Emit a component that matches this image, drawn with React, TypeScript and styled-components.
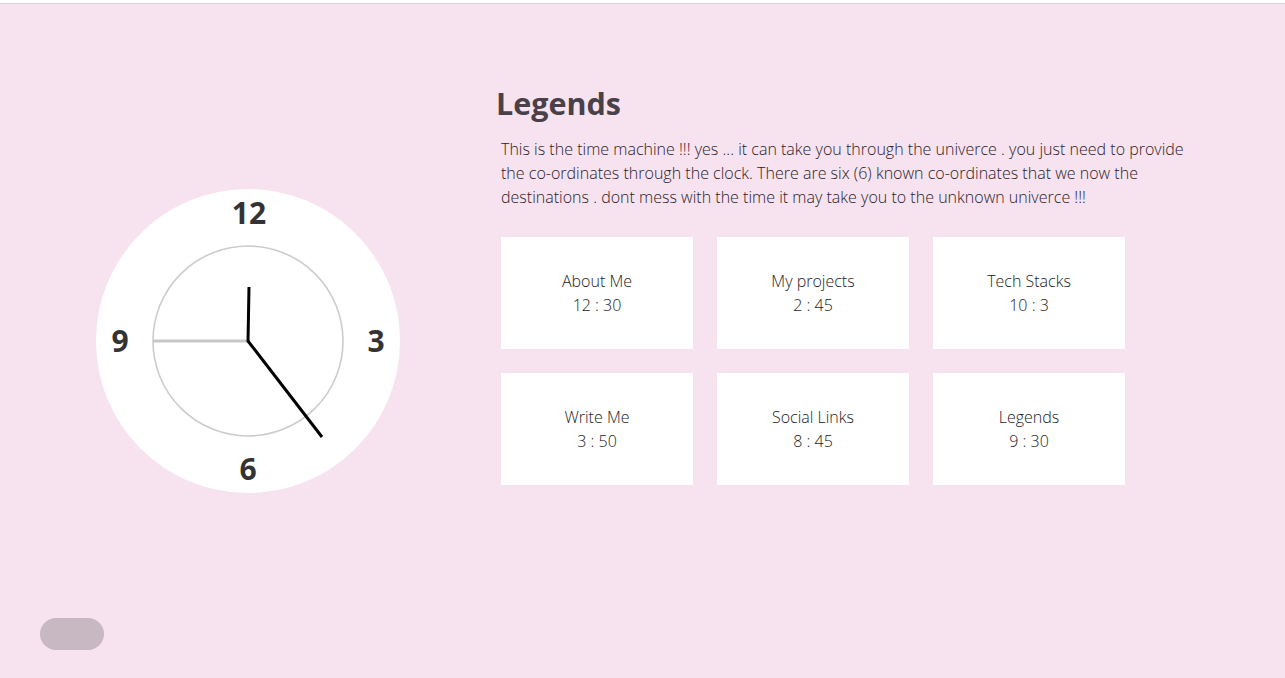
import React from "react";
import styled, { createGlobalStyle } from "styled-components";

const GlobalStyle = createGlobalStyle`
  html, body { margin: 0; padding: 0; }
  body {
    background: #f7e3ef;
    font-family: "Open Sans", "Noto Sans", sans-serif;
    color: #2b2b2b;
  }
`;

const TopBar = styled.div`
  height: 3px;
  background: #ffffff;
  border-bottom: 1px solid #dcd6da;
`;

const Main = styled.main`
  display: flex;
  height: 674px;
`;

const ClockColumn = styled.section`
  display: flex;
  align-items: center;
  padding-left: 96px;
  width: 304px;
  margin-right: 95px;
`;

const ClockFace = styled.svg`
  display: block;
  width: 304px;
  height: 304px;
`;

const Content = styled.section`
  display: flex;
  flex-direction: column;
  padding-top: 81px;
`;

const Title = styled.h1`
  margin: 0 0 0 1px;
  font-size: 30.5px;
  line-height: 36px;
  font-weight: 700;
  color: #4a4048;
`;

const Description = styled.p`
  margin: 16px 0 0 6px;
  width: 700px;
  font-size: 16px;
  line-height: 24px;
  font-weight: 300;
  letter-spacing: 0.01px;
  color: #2a2228;
`;

const Grid = styled.div`
  margin: 28px 0 0 6px;
  display: grid;
  grid-template-columns: repeat(3, 192px);
  grid-auto-rows: 112px;
  gap: 24px;
`;

const Card = styled.button`
  display: flex;
  flex-direction: column;
  align-items: center;
  justify-content: center;
  background: #ffffff;
  border: none;
  padding: 0;
  font-family: inherit;
  font-size: 16px;
  line-height: 24px;
  font-weight: 300;
  color: #222;
  cursor: pointer;
`;

const Toggle = styled.div`
  position: fixed;
  left: 40px;
  bottom: 28px;
  width: 64px;
  height: 32px;
  border-radius: 16px;
  background: #c7b8c1;
`;

const destinations = [
  { name: "About Me", time: "12 : 30" },
  { name: "My projects", time: "2 : 45" },
  { name: "Tech Stacks", time: "10 : 3" },
  { name: "Write Me", time: "3 : 50" },
  { name: "Social Links", time: "8 : 45" },
  { name: "Legends", time: "9 : 30" },
];

const numStyle = {
  fontFamily: '"Open Sans", "Noto Sans", sans-serif',
  fontWeight: 700,
  fontSize: 30,
  fill: "#333",
} as const;

function Clock() {
  return (
    <ClockFace viewBox="0 0 304 304">
      <circle cx="152" cy="152" r="152" fill="#fff" />
      <circle cx="152" cy="152" r="95" fill="none" stroke="#cccccc" strokeWidth="1.6" />
      <text x="153" y="34.7" textAnchor="middle" style={numStyle}>12</text>
      <text x="280" y="162.7" textAnchor="middle" style={numStyle}>3</text>
      <text x="152" y="290.7" textAnchor="middle" style={numStyle}>6</text>
      <text x="24" y="162.7" textAnchor="middle" style={numStyle}>9</text>
      <line x1="152" y1="152" x2="57" y2="152" stroke="#c8c8c8" strokeWidth="3" />
      <line x1="152" y1="153" x2="153" y2="98" stroke="#000" strokeWidth="3" />
      <line x1="152" y1="152" x2="226" y2="248" stroke="#000" strokeWidth="3" />
    </ClockFace>
  );
}

export default function App() {
  return (
    <>
      <GlobalStyle />
      <TopBar />
      <Main>
        <ClockColumn>
          <Clock />
        </ClockColumn>
        <Content>
          <Title>Legends</Title>
          <Description>
            This is the time machine !!! yes ... it can take you through the univerce . you just need to provide the co-ordinates through the clock. There are six (6) known co-ordinates that we now the destinations . dont mess with the time it may take you to the unknown univerce !!!
          </Description>
          <Grid>
            {destinations.map((d) => (
              <Card key={d.name}>
                <span>{d.name}</span>
                <span>{d.time}</span>
              </Card>
            ))}
          </Grid>
        </Content>
      </Main>
      <Toggle />
    </>
  );
}
